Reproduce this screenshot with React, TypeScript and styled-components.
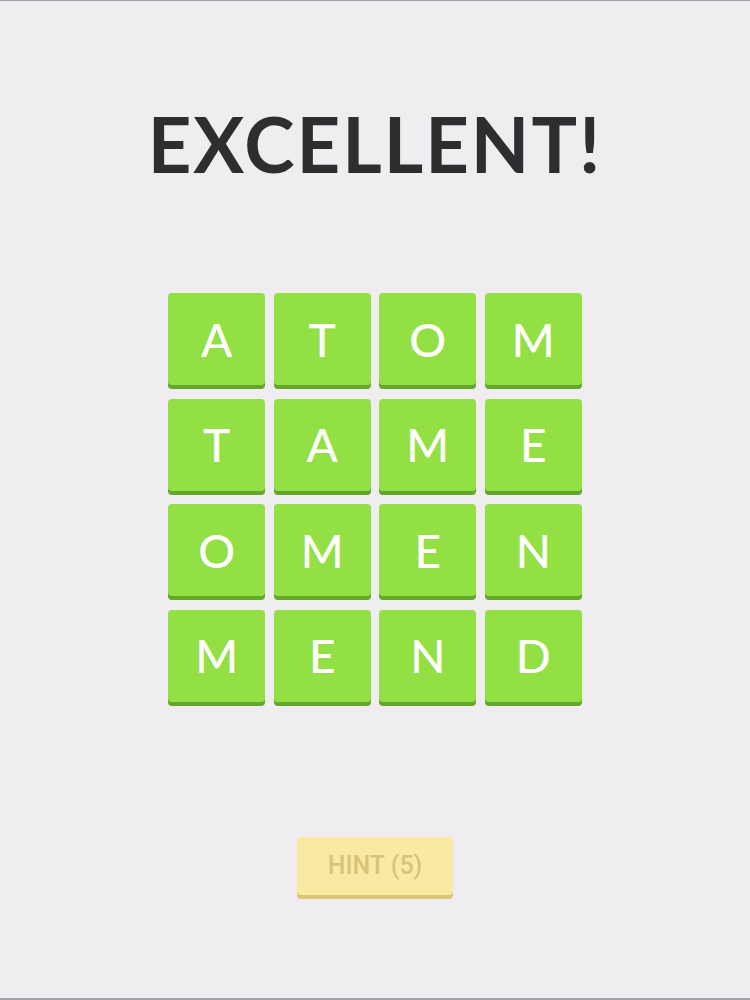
import React from 'react';
import styled, { createGlobalStyle } from 'styled-components';

const GlobalStyle = createGlobalStyle`
  html, body {
    margin: 0;
    padding: 0;
    background: #efedf0;
  }
`;

const Screen = styled.div`
  box-sizing: border-box;
  width: 750px;
  height: 1000px;
  border-top: 1px solid #a4a2a6;
  border-bottom: 2px solid #a4a2a6;
  background: #efedf0;
  display: flex;
  flex-direction: column;
  align-items: center;
  font-family: 'Lato', 'Noto Sans', sans-serif;
`;

const Title = styled.h1`
  margin: 98px 0 0;
  font-size: 76px;
  line-height: 90px;
  font-weight: 700;
  color: #2e2d30;
  letter-spacing: 2px;
`;

const Board = styled.div`
  margin-top: 104px;
  display: grid;
  grid-template-columns: repeat(4, 97px);
  grid-auto-rows: 96px;
  gap: 9.5px 8.5px;
`;

const Tile = styled.div`
  border-radius: 4px;
  background: #93e044;
  box-shadow: 0 4px 0 #64a72c;
  height: 92px;
  display: flex;
  align-items: center;
  justify-content: center;
  color: #ffffff;
  font-size: 46px;
  font-weight: 500;
`;

const HintButton = styled.button`
  margin-top: 131px;
  width: 156px;
  height: 58px;
  border: none;
  border-radius: 4px;
  background: #fae9a0;
  box-shadow: 0 4px 0 #dcc574;
  color: #d6c47c;
  font-family: 'Roboto', sans-serif;
  font-size: 25px;
  font-weight: 500;
  cursor: pointer;
`;

const rows = ['ATOM', 'TAME', 'OMEN', 'MEND'];

export default function App() {
  return (
    <Screen>
      <GlobalStyle />
      <Title>EXCELLENT!</Title>
      <Board>
        {rows.flatMap((word, r) =>
          word.split('').map((ch, c) => <Tile key={`${r}-${c}`}>{ch}</Tile>)
        )}
      </Board>
      <HintButton>HINT (5)</HintButton>
    </Screen>
  );
}
